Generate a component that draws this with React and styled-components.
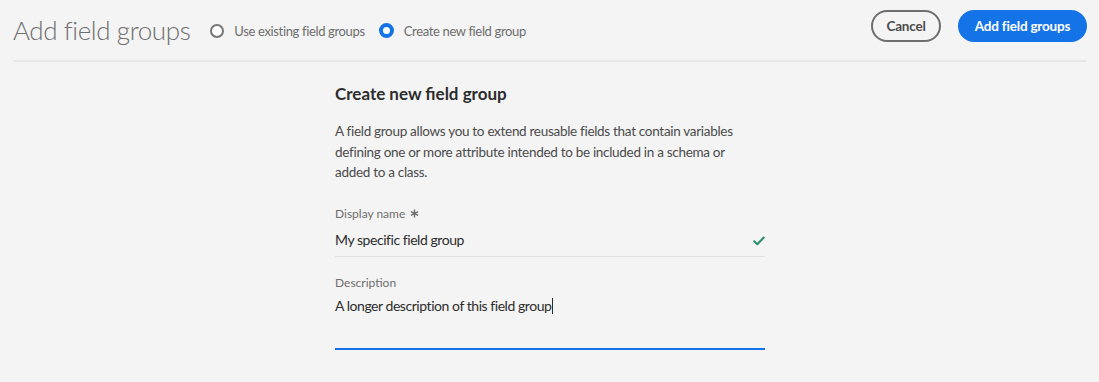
import React from "react";
import styled, { createGlobalStyle } from "styled-components";

const GlobalStyle = createGlobalStyle`
  html, body {
    margin: 0;
    padding: 0;
    background: #f4f4f4;
  }
  body {
    font-family: Lato, "Open Sans", sans-serif;
    color: #4b4b4b;
  }
`;

const Page = styled.div`
  width: 1099px;
  height: 382px;
  background: #f4f4f4;
  padding: 0 12px 0 13px;
  box-sizing: border-box;
`;

const Header = styled.header`
  display: flex;
  align-items: center;
  height: 59px;
  border-bottom: 2px solid #e8e8e8;
  padding-bottom: 1px;
`;

const Title = styled.h1`
  margin: 0 20px 0 0;
  font-size: 26px;
  font-weight: 300;
  color: #6e6e6e;
  letter-spacing: -0.4px;
  padding-top: 1px;
`;

const RadioGroup = styled.div`
  display: flex;
  align-items: center;
  gap: 14px;
  padding-top: 2px;
`;

const RadioOption = styled.label`
  display: flex;
  align-items: center;
  gap: 10px;
  font-size: 13px;
  letter-spacing: -0.35px;
  color: #6e6e6e;
`;

const RadioCircle = styled.span`
  width: ${(p) => (p.checked ? 15 : 14)}px;
  height: ${(p) => (p.checked ? 15 : 14)}px;
  box-sizing: border-box;
  border-radius: 50%;
  border: ${(p) => (p.checked ? "4.5px solid #1473e6" : "2px solid #747474")};
  background: #fff;
`;

const Actions = styled.div`
  margin-left: auto;
  align-self: flex-start;
  margin-top: 10px;
  display: flex;
  gap: 17px;
`;

const Button = styled.button`
  width: ${(p) => p.width}px;
  height: 32px;
  border-radius: 16px;
  padding: 0;
  font-family: inherit;
  font-size: 13.5px;
  font-weight: 700;
  letter-spacing: -0.2px;
  box-sizing: border-box;
  border: 2px solid ${(p) => (p.primary ? "#1473e6" : "#6e6e6e")};
  background: ${(p) => (p.primary ? "#1473e6" : "transparent")};
  color: ${(p) => (p.primary ? "#fff" : "#4b4b4b")};
`;

const Content = styled.main`
  width: 430px;
  margin: 0 auto;
  padding-top: 21px;
`;

const Heading = styled.h2`
  margin: 0 0 17px;
  font-size: 17px;
  font-weight: 700;
  color: #2c2c2c;
`;

const Paragraph = styled.p`
  max-width: 410px;
  margin: 0 0 23px;
  font-size: 13.5px;
  letter-spacing: -0.3px;
  line-height: 20.5px;
  color: #4b4b4b;
`;

const Field = styled.div`
  margin-bottom: 18px;
`;

const Label = styled.div`
  font-size: 12px;
  color: #6e6e6e;
  margin-bottom: 5px;
  display: flex;
  align-items: center;
  gap: 5px;
`;

const InputRow = styled.div`
  display: flex;
  align-items: flex-start;
  justify-content: space-between;
  height: ${(p) => p.height}px;
  padding-top: ${(p) => (p.focused ? 2 : 5)}px;
  box-sizing: border-box;
  font-size: 14px;
  letter-spacing: -0.45px;
  color: #2c2c2c;
  border-bottom: ${(p) => (p.focused ? "2px solid #1473e6" : "1px solid #e1e1e1")};
`;

const Caret = styled.span`
  display: inline-block;
  width: 1px;
  height: 16px;
  margin-left: 1px;
  background: #2c2c2c;
  vertical-align: -3px;
`;

const Check = () => (
  <svg width="12" height="10" viewBox="0 0 12 10" style={{ marginTop: 5 }}>
    <path d="M1.2 5.2 L4.3 8.3 L10.8 1.5" fill="none" stroke="#268e6c" strokeWidth="2" strokeLinecap="round" strokeLinejoin="round" />
  </svg>
);

const Asterisk = () => (
  <svg width="9" height="9" viewBox="0 0 10 10">
    <path d="M5 0.5 V9.5 M1 2.8 L9 7.2 M1 7.2 L9 2.8" stroke="#6e6e6e" strokeWidth="1.6" />
  </svg>
);

export default function App() {
  return (
    <>
      <GlobalStyle />
      <Page>
        <Header>
          <Title>Add field groups</Title>
          <RadioGroup>
            <RadioOption>
              <RadioCircle />
              Use existing field groups
            </RadioOption>
            <RadioOption>
              <RadioCircle checked />
              Create new field group
            </RadioOption>
          </RadioGroup>
          <Actions>
            <Button width={70}>Cancel</Button>
            <Button primary width={129}>Add field groups</Button>
          </Actions>
        </Header>
        <Content>
          <Heading>Create new field group</Heading>
          <Paragraph>
            A field group allows you to extend reusable fields that contain variables defining one or more attribute intended to be included in a schema or added to a class.
          </Paragraph>
          <Field>
            <Label>
              Display name <Asterisk />
            </Label>
            <InputRow height={31}>
              <span>My specific field group</span>
              <Check />
            </InputRow>
          </Field>
          <Field>
            <Label>Description</Label>
            <InputRow height={55} focused>
              <span>
                A longer description of this field group
                <Caret />
              </span>
            </InputRow>
          </Field>
        </Content>
      </Page>
    </>
  );
}
